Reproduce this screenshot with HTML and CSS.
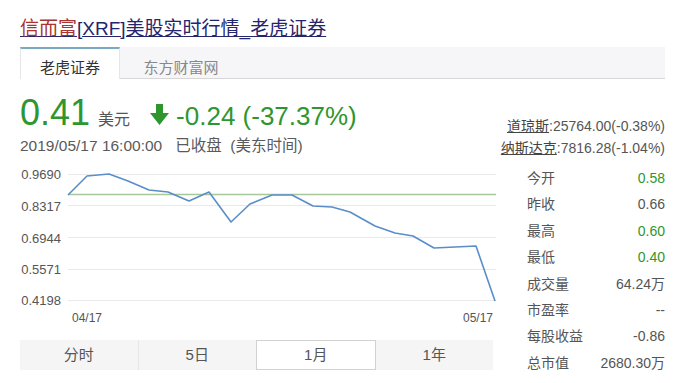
FILE: index.html
```html
<!DOCTYPE html>
<html lang="zh">
<head>
<meta charset="utf-8">
<link rel="stylesheet" href="styles.css">
</head>
<body>
<div class="page">
  <h1 class="title"><a href="#"><span class="red">信而富</span>[XRF]美股实时行情_老虎证券</a></h1>
  <div class="tabs">
    <div class="tab active">老虎证券</div>
    <div class="tab">东方财富网</div>
  </div>
  <div class="quote">
    <div class="quote-left">
      <div class="price-row">
        <span class="price">0.41</span>
        <span class="unit">美元</span>
        <svg class="arrow" width="19" height="21" viewBox="0 0 19 21"><path d="M6 0h7v9h6L9.5 21 0 9h6z" fill="#2f962f"/></svg>
        <span class="change">-0.24 (-37.37%)</span>
      </div>
      <div class="date">2019/05/17 16:00:00&nbsp;&nbsp; 已收盘 &nbsp;(美东时间)</div>
    </div>
    <div class="indices">
      <div><u>道琼斯</u>:25764.00(-0.38%)</div>
      <div><u>纳斯达克</u>:7816.28(-1.04%)</div>
    </div>
  </div>
  <div class="main">
    <div class="chart-col">
      <svg class="chart" width="480" height="165" viewBox="0 0 480 165">
        <g class="grid" stroke="#e9e9e9" stroke-width="1">
          <line x1="48" y1="10.5" x2="476" y2="10.5"/>
          <line x1="48" y1="41.5" x2="476" y2="41.5"/>
          <line x1="48" y1="73.5" x2="476" y2="73.5"/>
          <line x1="48" y1="105.5" x2="476" y2="105.5"/>
          <line x1="48" y1="136.5" x2="476" y2="136.5"/>
        </g>
        <line x1="48" y1="30.5" x2="476" y2="30.5" stroke="#a6c89a" stroke-width="1.5"/>
        <g class="ylab" font-size="13" fill="#555" text-anchor="end">
          <text x="41" y="15">0.9690</text>
          <text x="41" y="47">0.8317</text>
          <text x="41" y="79">0.6944</text>
          <text x="41" y="110">0.5571</text>
          <text x="41" y="141">0.4198</text>
        </g>
        <polyline fill="none" stroke="#5a8ec8" stroke-width="1.6" stroke-linejoin="round"
          points="48,31 67,12 89,10 108,17 129,26 148,28 169,37 189,28 211,58 230,40 252,31 272,31 293,42 312,43 330,48 355,62 375,69 393,72 414,84 456,82 475,137"/>
        <g class="xlab" font-size="12" fill="#555">
          <text x="52" y="158">04/17</text>
          <text x="473" y="158" text-anchor="end">05/17</text>
        </g>
      </svg>
      <div class="ranges">
        <div class="range">分时</div>
        <div class="range">5日</div>
        <div class="range active">1月</div>
        <div class="range">1年</div>
      </div>
    </div>
    <div class="stats">
      <div class="row"><span>今开</span><span class="up">0.58</span></div>
      <div class="row"><span>昨收</span><span>0.66</span></div>
      <div class="row"><span>最高</span><span class="up">0.60</span></div>
      <div class="row"><span>最低</span><span class="up">0.40</span></div>
      <div class="row"><span>成交量</span><span>64.24万</span></div>
      <div class="row"><span>市盈率</span><span>--</span></div>
      <div class="row"><span>每股收益</span><span>-0.86</span></div>
      <div class="row"><span>总市值</span><span>2680.30万</span></div>
    </div>
  </div>
</div>
</body>
</html>
```
FILE: styles.css
```css
* { box-sizing: border-box; }
html, body { margin: 0; padding: 0; background: #fff; }
body {
  font-family: "Liberation Sans", Arial, "Noto Sans CJK SC", sans-serif;
  color: #555;
  width: 676px;
  height: 383px;
  overflow: hidden;
}
.page { padding: 17px 11px 0 20px; }
.title {
  margin: 0;
  font-size: 19px;
  font-weight: normal;
  line-height: 24px;
  height: 30px;
}
.title a { color: #25256e; text-decoration: underline; }
.title .red { color: #a8332f; }
.tabs {
  display: flex;
  height: 32px;
  background: #f6f6f8;
  border-bottom: 1px solid #d6d6d6;
}
.tab {
  width: 100px;
  padding-top: 7px;
  font-size: 15px;
  color: #888;
  text-align: center;
  border-top: 2px solid transparent;
}
.tab + .tab { width: 122px; }
.tab.active {
  background: #fff;
  color: #333;
  border-top-color: #7ba9c2;
  border-left: 1px solid #e6e6e6;
  border-right: 1px solid #e6e6e6;
  height: 32px;
}
.quote {
  display: flex;
  justify-content: space-between;
  align-items: flex-end;
  height: 85px;
}
.quote-left { padding-bottom: 8px; }
.price-row {
  display: flex;
  align-items: baseline;
  color: #2f962f;
  height: 36px;
  line-height: 36px;
}
.price { font-size: 36px; }
.unit { font-size: 16px; color: #555; margin-left: 8px; }
.arrow { align-self: center; margin-left: 20px; margin-right: 7px; margin-top: 2px; }
.change { font-size: 26px; }
.date {
  font-size: 15.5px;
  line-height: 20px;
  margin-top: 5px;
  color: #5a5a5a;
}
.indices {
  font-size: 14px;
  line-height: 22px;
  text-align: right;
  color: #555;
  padding-bottom: 5px;
}
.indices u { color: #444; }
.main {
  display: flex;
  gap: 27px;
}
.chart-col { width: 480px; }
.chart { display: block; font-family: "Liberation Sans", Arial, sans-serif; }
.ranges {
  display: flex;
  margin-top: 11px;
  width: 473px;
  height: 30px;
  background: #f5f5f5;
}
.range {
  flex: 1;
  text-align: center;
  font-size: 15px;
  line-height: 30px;
  color: #555;
}
.range:first-child { border-right: 1px solid #e6e6e6; }
.range.active {
  background: #fff;
  border: 1px solid #d2d2d2;
  line-height: 28px;
}
.stats { width: 138px; padding-top: 1px; }
.row {
  display: flex;
  justify-content: space-between;
  height: 26.4px;
  line-height: 26.4px;
  font-size: 14px;
  color: #555;
}
.row .up { color: #2f962f; }
```
